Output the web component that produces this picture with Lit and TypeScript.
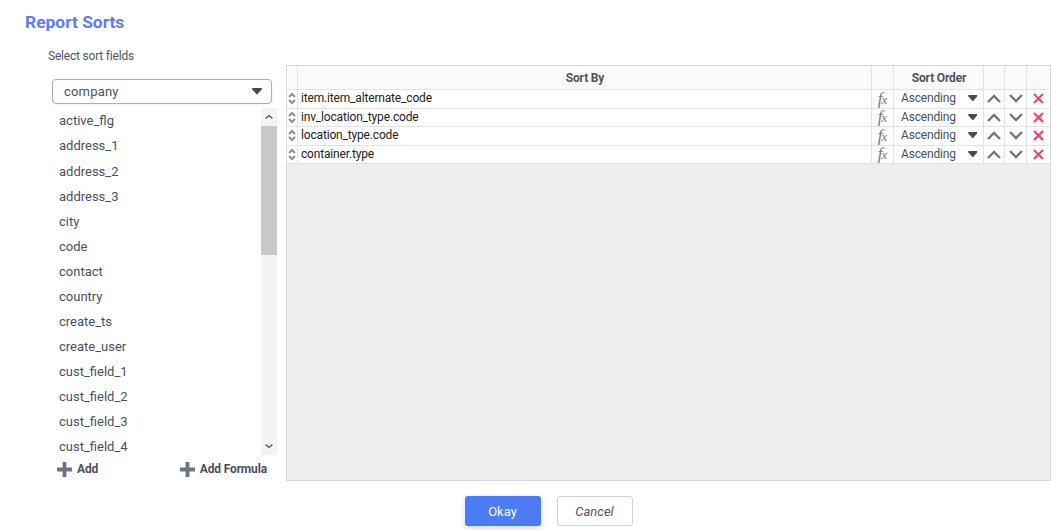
import { LitElement, html, css, svg } from "lit";
import { customElement } from "lit/decorators.js";

const fields = ["active_flg","address_1","address_2","address_3","city","code","contact","country","create_ts","create_user","cust_field_1","cust_field_2","cust_field_3","cust_field_4"];
const rows = ["item.item_alternate_code","inv_location_type.code","location_type.code","container.type"];

const caret = html`<svg class="caret" viewBox="0 0 11 7"><path d="M1 0h9a1 1 0 0 1 .8 1.6L6.2 6.6a1 1 0 0 1-1.4 0L.2 1.6A1 1 0 0 1 1 0z" fill="currentColor"/></svg>`;
const plus = html`<svg class="plus" viewBox="0 0 15 15"><path d="M5.6 0h3.8v5.6H15v3.8H9.4V15H5.6V9.4H0V5.6h5.6z" fill="#6c7480"/></svg>`;
const chev = (d: string, c: string) => svg`<svg class="chev" viewBox="0 0 14 9"><path d="${d}" fill="none" stroke="${c}" stroke-width="2.4"/></svg>`;

@customElement("app-root")
export class AppRoot extends LitElement {
  static styles = css`
    :host { display: block; width: 1051px; height: 530px; background: #fff; font-family: Roboto, sans-serif; color: #4a4f5c; overflow: hidden; }
    .title { font-size: 17.4px; font-weight: 700; color: #5c7cfa; line-height: 20px; padding: 12px 0 0 25px; }
    .sub { font-size: 12px; letter-spacing: -.2px; line-height: 16px; padding: 16px 0 0 48px; color: #4f5460; }
    .main { display: flex; padding: 1px 0 0 52px; height: 416px; }
    .left { width: 225px; margin-right: 9px; margin-top: 14px; display: flex; flex-direction: column; }
    .select { box-sizing: border-box; flex: none; width: 220px; height: 25px; border: 1px solid #a9aeb8; border-radius: 4px; display: flex; align-items: center; justify-content: space-between; padding: 0 9px 0 11px; font-size: 13px; letter-spacing: .2px; box-shadow: 0 1px 4px rgba(0,0,0,.06); color: #4a4f5c; }
    .caret { width: 10px; height: 6.4px; color: #444b59; display: block; }
    .listwrap { display: flex; flex: none; margin-top: 4px; height: 347px; overflow: hidden; }
    .list { flex: 1; padding: .4px 0 0 7px; font-size: 13px; }
    .item { height: 25.07px; line-height: 25px; }
    .sb { width: 16px; margin-left: auto; background: #f3f3f3; display: flex; flex-direction: column; }
    .sb .btn { height: 18px; display: flex; align-items: center; justify-content: center; }
    .sb .thumb { height: 129px; background: #c8c8c8; }
    .sb .rest { flex: 1; }
    .sb .chev { width: 8px; height: 6px; }
    .actions { display: flex; flex: none; justify-content: space-between; align-items: center; height: 20px; margin-top: 4px; padding: 0 10px 0 5px; font-size: 12px; letter-spacing: -.15px; font-weight: 700; color: #4a4f5c; }
    .act { display: flex; align-items: center; gap: 5px; }
    .plus { width: 15px; height: 15px; display: block; }
    .gridpanel { box-sizing: border-box; width: 765px; height: 416px; border: 1px solid #d9d9d9; background: #eeeeee; }
    .row { display: grid; grid-template-columns: 11px 574px 22px 90px 21px 22px 22px; background: #fff; font-size: 12px; letter-spacing: -.17px; color: #222; border-bottom: 1px solid #e3e3e3; height: 18.5px; box-sizing: border-box; }
    .row.head { height: 24px; background: #fafafa; font-weight: 700; color: #4f5460; }
    .row.head > div { padding-left: 1px; }
    .row > div { border-right: 1px solid #e3e3e3; display: flex; align-items: center; justify-content: center; box-sizing: border-box; min-width: 0; }
    .row > div:last-child { border-right: none; }
    .row > .name { justify-content: flex-start; padding: 0 0 1.2px 3px; }
    .row > .order { justify-content: space-between; padding: 0 6px 1.2px 7px; color: #4a4f5c; }
    .order .caret { width: 9.5px; height: 6px; }
    .fx { font-family: "Liberation Serif", serif; font-style: italic; font-size: 17px; line-height: 14px; color: #777; letter-spacing: -1px; margin-left: -1px; }
    .fx sub { font-size: 13px; line-height: 0; vertical-align: baseline; position: relative; top: 0; }
    .chev { width: 14px; height: 9px; display: block; }
    .drag { width: 8px; height: 13px; display: block; }
    .x { width: 11px; height: 11px; display: block; }
    .footer { display: flex; justify-content: center; gap: 16px; padding: 15px 0 0 0; margin-left: 46px; }
    button { box-sizing: border-box; width: 76px; height: 30px; border-radius: 3px; font-family: Roboto, sans-serif; font-size: 13px; margin: 0; padding: 0; }
    .ok { background: #4c7cf5; color: #fff; border: none; font-weight: 400; box-shadow: 0 2px 6px rgba(76,124,245,.3); }
    .cancel { background: #fff; border: 1px solid #d3d3d3; color: #555; font-style: italic; }
  `;

  render() {
    return html`
      <div class="title">Report Sorts</div>
      <div class="sub">Select sort fields</div>
      <div class="main">
        <div class="left">
          <div class="select"><span>company</span>${caret}</div>
          <div class="listwrap">
            <div class="list">${fields.map((f) => html`<div class="item">${f}</div>`)}</div>
            <div class="sb">
              <div class="btn">${chev("M1 7l6-5 6 5", "#505050")}</div>
              <div class="thumb"></div>
              <div class="rest"></div>
              <div class="btn">${chev("M1 2l6 5 6-5", "#505050")}</div>
            </div>
          </div>
          <div class="actions">
            <div class="act">${plus}<span>Add</span></div>
            <div class="act">${plus}<span>Add Formula</span></div>
          </div>
        </div>
        <div class="gridpanel">
          <div class="row head">
            <div></div><div>Sort By</div><div></div><div>Sort Order</div><div></div><div></div><div></div>
          </div>
          ${rows.map((r) => html`
            <div class="row">
              <div><svg class="drag" viewBox="0 0 8 13"><path d="M1 5l3-3 3 3M1 8l3 3 3-3" fill="none" stroke="#8a8f98" stroke-width="2"/></svg></div>
              <div class="name">${r}</div>
              <div><span class="fx">f<sub>x</sub></span></div>
              <div class="order"><span>Ascending</span>${caret}</div>
              <div>${chev("M1 8l6-6 6 6", "#6c7480")}</div>
              <div>${chev("M1 1l6 6 6-6", "#6c7480")}</div>
              <div><svg class="x" viewBox="0 0 11 11"><path d="M1 1l9 9M10 1l-9 9" fill="none" stroke="#f0476b" stroke-width="2.3"/></svg></div>
            </div>`)}
        </div>
      </div>
      <div class="footer">
        <button class="ok">Okay</button>
        <button class="cancel">Cancel</button>
      </div>
    `;
  }
}
